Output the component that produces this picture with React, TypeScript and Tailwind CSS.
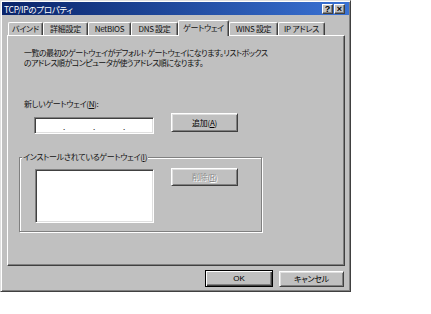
import React from "react";

function Btn({
  w,
  h,
  children,
  def,
  disabled,
}: {
  w: string;
  h: string;
  children: React.ReactNode;
  def?: boolean;
  disabled?: boolean;
}) {
  const bevel = def
    ? "border border-black shadow-[inset_1px_1px_0_#fff,inset_-1px_-1px_0_#404040,inset_-2px_-2px_0_#808080]"
    : "border border-t-white border-l-white border-r-[#404040] border-b-[#404040] shadow-[inset_1px_1px_0_#dfdfdf,inset_-1px_-1px_0_#808080]";
  return (
    <div
      className={`${w} ${h} ${bevel} bg-[#c0c0c0] flex items-center justify-center shrink-0 ${
        disabled ? "text-[#8a8a8a] [text-shadow:1px_1px_0_#fff]" : "text-black"
      }`}
    >
      {children}
    </div>
  );
}

function TitleBtn({ children }: { children: React.ReactNode }) {
  return (
    <div className="w-[11px] h-[10px] bg-[#c0c0c0] border border-t-white border-l-white border-r-[#404040] border-b-[#404040] shadow-[inset_-1px_-1px_0_#808080] flex items-center justify-center text-black font-bold text-[9px] leading-[8px] tracking-normal font-['Liberation_Sans',sans-serif]">
      {children}
    </div>
  );
}

function Tab({ label, w, selected }: { label: string; w: string; selected?: boolean }) {
  return (
    <div
      className={`${w} ${
        selected ? "h-[16px] relative z-10 -mb-px bg-[#c0c0c0]" : "h-[13px]"
      } border-t border-l border-r border-t-white border-l-white border-r-[#404040] rounded-t-[2px] shadow-[inset_-1px_0_0_#808080] flex items-center justify-center shrink-0 whitespace-nowrap`}
    >
      <span className={selected ? "-mt-[2px]" : ""}>{label}</span>
    </div>
  );
}

export default function App() {
  return (
    <div className="w-[431px] h-[314px] bg-white font-['Noto_Sans_CJK_JP',sans-serif] text-[8px] leading-[10px] tracking-[-0.3px] text-[#111] [font-feature-settings:'palt']">
      <div className="w-[351px] h-[292px] bg-[#c0c0c0] border border-t-[#dfdfdf] border-l-[#dfdfdf] border-r-[#404040] border-b-[#404040] shadow-[inset_1px_1px_0_#fff,inset_-1px_-1px_0_#808080] p-px flex flex-col">
        {/* Title bar */}
        <div className="h-[13px] bg-gradient-to-r from-[#0a246a] to-[#3a72d4] flex items-center pl-[2px] pr-[4px] text-white">
          <span className="flex-1 leading-[12px] text-[8.5px]">TCP/IPのプロパティ</span>
          <div className="flex gap-px">
            <TitleBtn>?</TitleBtn>
            <TitleBtn>×</TitleBtn>
          </div>
        </div>

        {/* Tabs */}
        <div className="ml-[6px] mt-[4px] flex items-end h-[16px]">
          <Tab label="バインド" w="w-[35px]" />
          <Tab label="詳細設定" w="w-[45px]" />
          <Tab label="NetBIOS" w="w-[43px]" />
          <Tab label="DNS 設定" w="w-[47px]" />
          <Tab label="ゲートウェイ" w="w-[51px]" selected />
          <Tab label="WINS 設定" w="w-[49px]" />
          <Tab label="IP アドレス" w="w-[47px]" />
        </div>

        {/* Panel */}
        <div className="ml-[5px] w-[338px] h-[231px] border border-t-white border-l-white border-r-[#404040] border-b-[#404040] shadow-[inset_-1px_-1px_0_#808080] flex flex-col">
          <div className="mt-[12px] pl-[16px] leading-[10px] tracking-[-0.55px]">
            <div>一覧の最初のゲートウェイがデフォルト ゲートウェイになります。リストボックス</div>
            <div>のアドレス順がコンピュータが使うアドレス順になります。</div>
          </div>

          <div className="mt-[31px] pl-[16px]">
            新しいゲートウェイ(<span className="underline">N</span>):
          </div>

          <div className="mt-[4px] ml-[26px] flex items-start">
            <div className="mt-[4px] w-[120px] h-[17px] bg-white border border-t-[#808080] border-l-[#808080] border-b-white border-r-white shadow-[inset_1px_1px_0_#404040,inset_-1px_-1px_0_#dfdfdf] flex items-end pb-[2px] leading-[9px]">
              <div className="flex-1" />
              <span>.</span>
              <div className="flex-1" />
              <span>.</span>
              <div className="flex-1" />
              <span>.</span>
              <div className="flex-1" />
            </div>
            <div className="ml-[17px]">
              <Btn w="w-[67px]" h="h-[19px]">
                追加(<span className="underline">A</span>)
              </Btn>
            </div>
          </div>

          <div className="mt-[23px] ml-[11px] w-[243px] h-[75px] relative border border-[#808080] shadow-[inset_1px_1px_0_#fff,1px_1px_0_#fff] flex items-start pl-[15px] pt-[10px]">
            <span className="absolute left-[2px] -top-[6px] bg-[#c0c0c0] px-px leading-[10px]">
              インストールされているゲートウェイ(<span className="underline">I</span>)
            </span>
            <div className="mt-px w-[119px] h-[54px] bg-white border border-t-[#808080] border-l-[#808080] border-b-white border-r-white shadow-[inset_1px_1px_0_#404040,inset_-1px_-1px_0_#dfdfdf]" />
            <div className="ml-[17px]">
              <Btn w="w-[67px]" h="h-[18px]" disabled>
                削除(<span className="underline">R</span>)
              </Btn>
            </div>
          </div>
        </div>

        {/* Bottom buttons */}
        <div className="mt-[4px] flex justify-end pr-[5px] gap-[6px] items-start">
          <Btn w="w-[68px]" h="h-[17px]" def>
            <span className="font-['Liberation_Sans',sans-serif] tracking-normal">OK</span>
          </Btn>
          <div className="mt-px">
            <Btn w="w-[65px]" h="h-[16px]">
              キャンセル
            </Btn>
          </div>
        </div>
      </div>
    </div>
  );
}
